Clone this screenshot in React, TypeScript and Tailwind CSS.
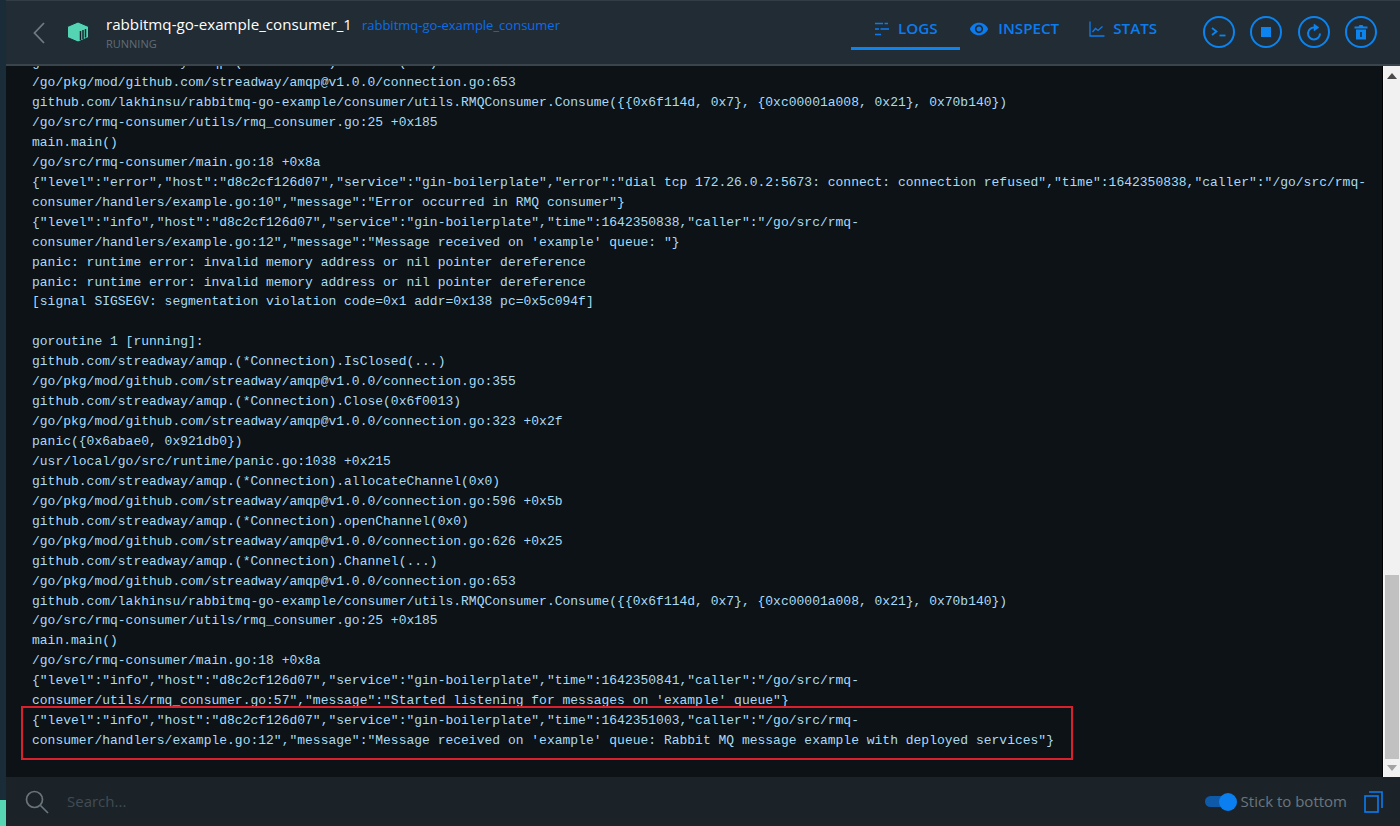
const olderLines = [
  'github.com/streadway/amqp.(*Connection).Channel(...)',
  '/go/pkg/mod/github.com/streadway/amqp@v1.0.0/connection.go:653',
  'github.com/lakhinsu/rabbitmq-go-example/consumer/utils.RMQConsumer.Consume({{0x6f114d, 0x7}, {0xc00001a008, 0x21}, 0x70b140})',
  '/go/src/rmq-consumer/utils/rmq_consumer.go:25 +0x185',
  'main.main()',
  '/go/src/rmq-consumer/main.go:18 +0x8a',
  '{"level":"error","host":"d8c2cf126d07","service":"gin-boilerplate","error":"dial tcp 172.26.0.2:5673: connect: connection refused","time":1642350838,"caller":"/go/src/rmq-',
  'consumer/handlers/example.go:10","message":"Error occurred in RMQ consumer"}',
  '{"level":"info","host":"d8c2cf126d07","service":"gin-boilerplate","time":1642350838,"caller":"/go/src/rmq-',
  'consumer/handlers/example.go:12","message":"Message received on \'example\' queue: "}',
  'panic: runtime error: invalid memory address or nil pointer dereference',
  'panic: runtime error: invalid memory address or nil pointer dereference',
  '[signal SIGSEGV: segmentation violation code=0x1 addr=0x138 pc=0x5c094f]',
  ' ',
  'goroutine 1 [running]:',
  'github.com/streadway/amqp.(*Connection).IsClosed(...)',
  '/go/pkg/mod/github.com/streadway/amqp@v1.0.0/connection.go:355',
  'github.com/streadway/amqp.(*Connection).Close(0x6f0013)',
  '/go/pkg/mod/github.com/streadway/amqp@v1.0.0/connection.go:323 +0x2f',
  'panic({0x6abae0, 0x921db0})',
  '/usr/local/go/src/runtime/panic.go:1038 +0x215',
  'github.com/streadway/amqp.(*Connection).allocateChannel(0x0)',
  '/go/pkg/mod/github.com/streadway/amqp@v1.0.0/connection.go:596 +0x5b',
  'github.com/streadway/amqp.(*Connection).openChannel(0x0)',
  '/go/pkg/mod/github.com/streadway/amqp@v1.0.0/connection.go:626 +0x25',
  'github.com/streadway/amqp.(*Connection).Channel(...)',
  '/go/pkg/mod/github.com/streadway/amqp@v1.0.0/connection.go:653',
  'github.com/lakhinsu/rabbitmq-go-example/consumer/utils.RMQConsumer.Consume({{0x6f114d, 0x7}, {0xc00001a008, 0x21}, 0x70b140})',
  '/go/src/rmq-consumer/utils/rmq_consumer.go:25 +0x185',
  'main.main()',
  '/go/src/rmq-consumer/main.go:18 +0x8a',
  '{"level":"info","host":"d8c2cf126d07","service":"gin-boilerplate","time":1642350841,"caller":"/go/src/rmq-',
  'consumer/utils/rmq_consumer.go:57","message":"Started listening for messages on \'example\' queue"}',
];

const markedLines = [
  '{"level":"info","host":"d8c2cf126d07","service":"gin-boilerplate","time":1642351003,"caller":"/go/src/rmq-',
  'consumer/handlers/example.go:12","message":"Message received on \'example\' queue: Rabbit MQ message example with deployed services"}',
];

const LogLine = ({ text }: { text: string }) => (
  <div className="h-[19.94px] leading-[20px] whitespace-pre">{text}</div>
);

const Tab = ({ icon, label, active }: { icon: React.ReactNode; label: string; active?: boolean }) => (
  <div
    className={`flex h-[49px] items-center justify-center gap-[8px] border-b-[3px] pt-[9px] ${
      active ? 'w-[109px] border-[#0b84f0]' : 'border-transparent'
    }`}
  >
    {icon}
    <span className="text-[15.2px] font-semibold text-[#0b7cf0]">{label}</span>
  </div>
);

const CircleButton = ({ children }: { children: React.ReactNode }) => (
  <div className="flex h-[32px] w-[32px] items-center justify-center rounded-full border-2 border-[#0b84f0]">
    {children}
  </div>
);

const App = () => {
  return (
    <div className="flex h-[826px] w-[1400px] overflow-hidden bg-[#0c1215] font-['Open_Sans',sans-serif]">
      <div className="flex w-[6px] flex-col justify-end bg-[#1a2c37]">
        <div className="h-[26px] bg-[#57d6b4]" />
      </div>

      <div className="flex min-w-0 flex-1 flex-col">
        <header className="flex h-[66px] shrink-0 items-center border-t border-b-2 border-t-[#323d45] border-b-[#39444c] bg-[#212c35] pl-[26px] pr-[23px]">
          <svg width="14" height="24" viewBox="0 0 14 24" fill="none" className="mr-[20px]">
            <path d="M12 2 2.5 12 12 22" stroke="#6f7a83" strokeWidth="1.8" />
          </svg>
          <svg width="24" height="22" viewBox="0 0 24 22" className="mb-[1px] mr-[16px]">
            <path d="M12 1 22.5 5.5V16.5L12 21 1.5 16.5V5.5Z" fill="#54d4b2" stroke="#16303a" strokeWidth="1" />
            <path d="M14.5 10v9M17 9v9M19.5 8v8.5" stroke="#14232b" strokeWidth="1.5" />
          </svg>
          <div className="flex flex-col">
            <div className="flex items-baseline gap-[10px] whitespace-nowrap">
              <span className="text-[15.15px] leading-[22px] text-white">rabbitmq-go-example_consumer_1</span>
              <span className="text-[13px] leading-[22px] text-[#0a6ee8]">rabbitmq-go-example_consumer</span>
            </div>
            <span className="text-[11px] leading-[16px] text-[#626d75]">RUNNING</span>
          </div>

          <nav className="ml-auto flex items-center self-start">
            <Tab
              active
              label="LOGS"
              icon={
                <svg width="16" height="16" viewBox="0 0 16 16" fill="none" stroke="#0b7cf0" strokeWidth="1.4">
                  <path d="M1 2.5H9M10.5 2.5H14M1 8H5M6.5 8H15M1 13.5H7" />
                </svg>
              }
            />
            <div className="ml-[9px]">
              <Tab
                label="INSPECT"
                icon={
                  <svg width="20" height="20" viewBox="0 0 24 24" fill="#0b7cf0" className="mr-[1px]">
                    <path d="M12 4.5C7 4.5 2.73 7.61 1 12c1.73 4.39 6 7.5 11 7.5s9.27-3.11 11-7.5c-1.73-4.39-6-7.5-11-7.5zM12 17c-2.76 0-5-2.24-5-5s2.24-5 5-5 5 2.24 5 5-2.24 5-5 5zm0-8c-1.66 0-3 1.34-3 3s1.34 3 3 3 3-1.34 3-3-1.34-3-3-3z" />
                  </svg>
                }
              />
            </div>
            <div className="ml-[30px]">
              <Tab
                label="STATS"
                icon={
                  <svg width="16" height="16" viewBox="0 0 16 16" fill="none" stroke="#0b7cf0" strokeWidth="1.3">
                    <path d="M1 0.5V15H15.5" />
                    <path d="M3.5 11 6.5 7.5 9 9.5 13.5 5.5" />
                  </svg>
                }
              />
            </div>
          </nav>

          <div className="mb-[1px] ml-[46px] flex items-center gap-[15.3px]">
            <CircleButton>
              <svg width="18" height="12" viewBox="0 0 18 12" fill="none" stroke="#0b84f0" strokeWidth="1.8">
                <path d="M2 2 6.5 5.5 2 9" />
                <path d="M9.5 9.5H15.5" />
              </svg>
            </CircleButton>
            <CircleButton>
              <div className="h-[10px] w-[10px] bg-[#0b84f0]" />
            </CircleButton>
            <CircleButton>
              <svg width="16" height="18" viewBox="0 0 16 18" fill="none" stroke="#0b84f0" strokeWidth="2">
                <path d="M8.5 4.5A6 6 0 1 0 14 10.5" />
                <path d="M8 1V8L13 4.5Z" fill="#0b84f0" strokeWidth="0.5" />
              </svg>
            </CircleButton>
            <CircleButton>
              <svg width="14" height="16" viewBox="0 0 14 16">
                <path
                  fillRule="evenodd"
                  d="M0.5 2.5H4.5L5.5 1H8.5L9.5 2.5H13.5V4.5H0.5ZM2 5.5H12V15.5H2ZM6.2 8V13H7.8V8Z"
                  fill="#0b84f0"
                />
              </svg>
            </CircleButton>
          </div>
        </header>

        <div className="flex min-h-0 flex-1">
          <main className="flex min-w-0 flex-1 flex-col justify-end overflow-hidden border-r border-r-[#000000] pb-[26px] pl-[26px] font-['Liberation_Mono',monospace] text-[13px] text-[#a9dbf7]">
            {olderLines.map((line, i) => (
              <LogLine key={i} text={line} />
            ))}
            <div className="relative">
              <div className="absolute -left-[11px] -top-[5px] h-[54px] w-[1052px] border-2 border-[#d9202c]" />
              {markedLines.map((line, i) => (
                <LogLine key={i} text={line} />
              ))}
            </div>
          </main>

          <div className="flex w-[17px] shrink-0 flex-col items-center border-l border-l-[#f8f8f8] bg-[#f1f1f1]">
            <div className="flex h-[17px] items-center justify-center">
              <div className="mt-[2px] border-x-[5px] border-b-[6px] border-x-transparent border-b-[#4b4b4b]" />
            </div>
            <div className="mt-[492px] h-[184px] w-[14px] bg-[#c1c1c1]" />
            <div className="flex h-[17px] items-center justify-center">
              <div className="border-x-[5px] border-t-[6px] border-x-transparent border-t-[#a3a3a3]" />
            </div>
          </div>
        </div>

        <footer className="flex h-[49px] shrink-0 items-center bg-[#1b2329] pl-[19px] pr-[17px]">
          <svg width="24" height="24" viewBox="0 0 24 24" fill="none" stroke="#6a747b" strokeWidth="1.7" className="mr-[18px]">
            <circle cx="9.5" cy="9.5" r="8" />
            <path d="M15.5 15.5 23 23" />
          </svg>
          <span className="text-[15px] text-[#414c53]">Search...</span>

          <div className="relative ml-auto h-[11px] w-[24px] rounded-full bg-[#0f5aa8]">
            <div className="absolute -right-[8px] -top-[3.5px] h-[18px] w-[18px] rounded-full bg-[#0b7ff0]" />
          </div>
          <span className="ml-[12px] text-[15px] text-[#6b767e]">Stick to bottom</span>
          <svg width="19" height="22" viewBox="0 0 19 22" fill="none" stroke="#0b7cf0" strokeWidth="1.6" className="ml-[17px]">
            <rect x="1" y="5" width="13" height="16" />
            <path d="M5 1H18V17" />
          </svg>
        </footer>
      </div>
    </div>
  );
};

export default App;
